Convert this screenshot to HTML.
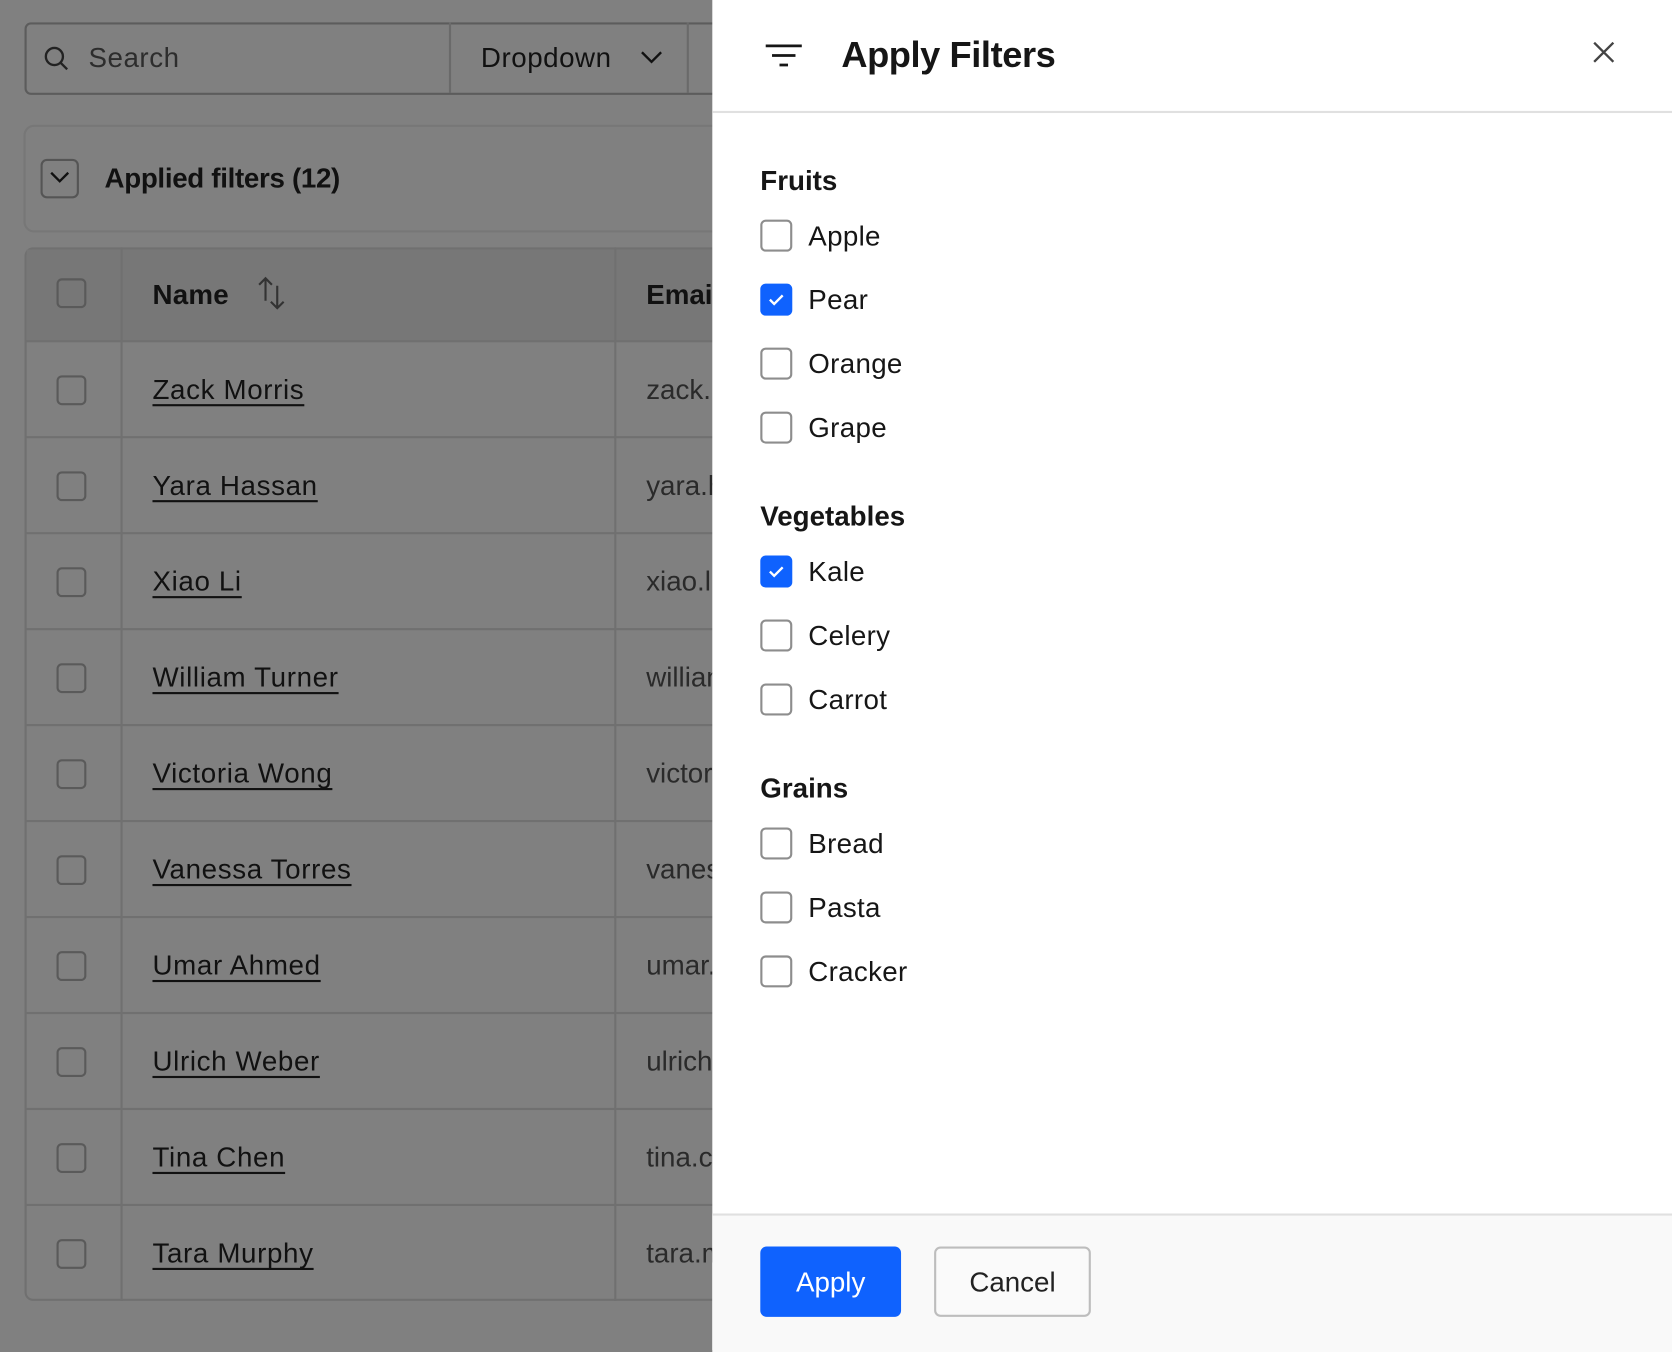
<!DOCTYPE html>
<html><head><style>
html,body{margin:0;padding:0;width:1672px;height:1350px;overflow:hidden;background:#808080}
#w{position:absolute;left:0;top:0;width:1568px;height:1266px;transform:scale(1.06633);transform-origin:0 0;font-family:"Liberation Sans",sans-serif;color:#111}
.a{position:absolute}
.cb{position:absolute;width:28px;height:28px;border:2px solid #5a5a5a;border-radius:5px;box-sizing:border-box}
.name{position:absolute;left:143px;font-size:26px;letter-spacing:0.6px;text-decoration:underline;text-underline-offset:5px;text-decoration-thickness:2px;color:#111}
.em{position:absolute;left:606px;font-size:26px;color:#2a2a2a;white-space:nowrap}
.row{position:absolute;left:23px;width:660px;height:90px;border-top:2px solid #707070}
.pcb{position:absolute;left:713px;width:30px;height:30px;border:2px solid #8d8d8d;border-radius:5px;box-sizing:border-box;background:#fff}
.pcb.on{background:#0f62fe;border-color:#0f62fe}
.lbl{position:absolute;left:758px;font-size:26px;letter-spacing:0.3px;color:#161616}
.sec{position:absolute;left:713px;font-size:26px;font-weight:bold;color:#161616}
</style></head><body><div id="w">
<div class="a" style="left:23px;top:21px;width:680px;height:64px;border:2px solid #5c5c5c;border-radius:6px"></div>
<div class="a" style="left:421px;top:21px;width:2px;height:66px;background:#6a6a6a"></div>
<div class="a" style="left:644px;top:21px;width:2px;height:66px;background:#6a6a6a"></div>
<svg class="a" style="left:40px;top:42px" width="26" height="26" viewBox="0 0 26 26"><circle cx="11" cy="11" r="8" fill="none" stroke="#222" stroke-width="2.2"/><path d="M17 17l6 6" stroke="#222" stroke-width="2.2"/></svg>
<div class="a" style="left:83px;top:39px;font-size:26px;color:#2d2d2d;letter-spacing:0.5px">Search</div>
<div class="a" style="left:451px;top:39px;font-size:26px;color:#111;letter-spacing:0.5px">Dropdown</div>
<svg class="a" style="left:600px;top:46px" width="22" height="16" viewBox="0 0 22 16"><path d="M2 3l9 9 9-9" fill="none" stroke="#111" stroke-width="2.2"/></svg>
<div class="a" style="left:22px;top:117px;width:680px;height:97px;border:2px solid #777;border-radius:10px"></div>
<div class="a" style="left:38px;top:149px;width:36px;height:37px;border:2px solid #555;border-radius:6px;box-sizing:border-box"></div>
<svg class="a" style="left:45px;top:158px" width="22" height="16" viewBox="0 0 22 16"><path d="M3 4l8 8 8-8" fill="none" stroke="#111" stroke-width="2.2"/></svg>
<div class="a" style="left:98px;top:152px;font-size:26px;font-weight:bold;color:#111;letter-spacing:-0.3px">Applied filters (12)</div>
<div class="a" style="left:23px;top:232px;width:660px;height:988px;border:2px solid #707070;border-radius:8px;box-sizing:border-box"></div>
<div class="a" style="left:25px;top:234px;width:660px;height:86px;background:#777"></div>
<div class="a" style="left:113px;top:232px;width:2px;height:988px;background:#707070"></div>
<div class="a" style="left:576px;top:232px;width:2px;height:988px;background:#707070"></div>
<div class="cb" style="left:53px;top:261px"></div>
<div class="a" style="left:143px;top:261px;font-size:26px;font-weight:bold;letter-spacing:0.2px">Name</div>
<svg class="a" style="left:240px;top:258px" width="30" height="34" viewBox="0 0 30 34"><path d="M9 24V3M3 9l6-6 6 6M20 10v21M14 25l6 6 6-6" fill="none" stroke="#333" stroke-width="2"/></svg>
<div class="a" style="left:606px;top:261px;font-size:26px;font-weight:bold">Email</div>

<div class="row" style="top:319px"></div><div class="cb" style="left:53px;top:352px"></div><div class="name" style="top:350px">Zack Morris</div><div class="em" style="top:350px">zack.m</div>
<div class="row" style="top:409px"></div><div class="cb" style="left:53px;top:442px"></div><div class="name" style="top:440px">Yara Hassan</div><div class="em" style="top:440px">yara.h</div>
<div class="row" style="top:499px"></div><div class="cb" style="left:53px;top:532px"></div><div class="name" style="top:530px">Xiao Li</div><div class="em" style="top:530px">xiao.li</div>
<div class="row" style="top:589px"></div><div class="cb" style="left:53px;top:622px"></div><div class="name" style="top:620px">William Turner</div><div class="em" style="top:620px">william</div>
<div class="row" style="top:679px"></div><div class="cb" style="left:53px;top:712px"></div><div class="name" style="top:710px">Victoria Wong</div><div class="em" style="top:710px">victoria</div>
<div class="row" style="top:769px"></div><div class="cb" style="left:53px;top:802px"></div><div class="name" style="top:800px">Vanessa Torres</div><div class="em" style="top:800px">vanessa</div>
<div class="row" style="top:859px"></div><div class="cb" style="left:53px;top:892px"></div><div class="name" style="top:890px">Umar Ahmed</div><div class="em" style="top:890px">umar.a</div>
<div class="row" style="top:949px"></div><div class="cb" style="left:53px;top:982px"></div><div class="name" style="top:980px">Ulrich Weber</div><div class="em" style="top:980px">ulrich.w</div>
<div class="row" style="top:1039px"></div><div class="cb" style="left:53px;top:1072px"></div><div class="name" style="top:1070px">Tina Chen</div><div class="em" style="top:1070px">tina.ch</div>
<div class="row" style="top:1129px"></div><div class="cb" style="left:53px;top:1162px"></div><div class="name" style="top:1160px">Tara Murphy</div><div class="em" style="top:1160px">tara.m</div>

<div class="a" style="left:668px;top:0;width:900px;height:1266px;background:#fff"></div>
<div class="a" style="left:668px;top:104px;width:900px;height:2px;background:#e0e0e0"></div>
<svg class="a" style="left:718px;top:40px" width="34" height="24" viewBox="0 0 34 24"><path d="M0 3h34M6 12h22M13 21h8" stroke="#161616" stroke-width="2.6"/></svg>
<div class="a" style="left:789px;top:33px;font-size:34px;font-weight:bold;color:#161616;letter-spacing:-0.4px">Apply Filters</div>
<svg class="a" style="left:1493px;top:38px" width="22" height="22" viewBox="0 0 22 22"><path d="M2 2l18 18M20 2L2 20" stroke="#444" stroke-width="2.2"/></svg>

<div class="sec" style="top:154px">Fruits</div>
<div class="pcb" style="top:206px"></div><div class="lbl" style="top:206px">Apple</div>
<div class="pcb on" style="top:266px"><svg width="26" height="26" viewBox="0 0 26 26"><path d="M7 13l4 4 8-8" fill="none" stroke="#fff" stroke-width="2.2"/></svg></div><div class="lbl" style="top:266px">Pear</div>
<div class="pcb" style="top:326px"></div><div class="lbl" style="top:326px">Orange</div>
<div class="pcb" style="top:386px"></div><div class="lbl" style="top:386px">Grape</div>
<div class="sec" style="top:469px">Vegetables</div>
<div class="pcb on" style="top:521px"><svg width="26" height="26" viewBox="0 0 26 26"><path d="M7 13l4 4 8-8" fill="none" stroke="#fff" stroke-width="2.2"/></svg></div><div class="lbl" style="top:521px">Kale</div>
<div class="pcb" style="top:581px"></div><div class="lbl" style="top:581px">Celery</div>
<div class="pcb" style="top:641px"></div><div class="lbl" style="top:641px">Carrot</div>
<div class="sec" style="top:724px">Grains</div>
<div class="pcb" style="top:776px"></div><div class="lbl" style="top:776px">Bread</div>
<div class="pcb" style="top:836px"></div><div class="lbl" style="top:836px">Pasta</div>
<div class="pcb" style="top:896px"></div><div class="lbl" style="top:896px">Cracker</div>

<div class="a" style="left:668px;top:1138px;width:900px;height:128px;background:#f9f9f9;border-top:2px solid #e0e0e0"></div>
<div class="a" style="left:713px;top:1169px;width:132px;height:66px;background:#0f62fe;border-radius:6px;color:#fff;font-size:26px;line-height:66px;text-align:center">Apply</div>
<div class="a" style="left:876px;top:1169px;width:147px;height:66px;border:2px solid #bdbdbd;border-radius:6px;box-sizing:border-box;background:#fafafa;color:#222;font-size:26px;line-height:62px;text-align:center">Cancel</div>
</div></body></html>
